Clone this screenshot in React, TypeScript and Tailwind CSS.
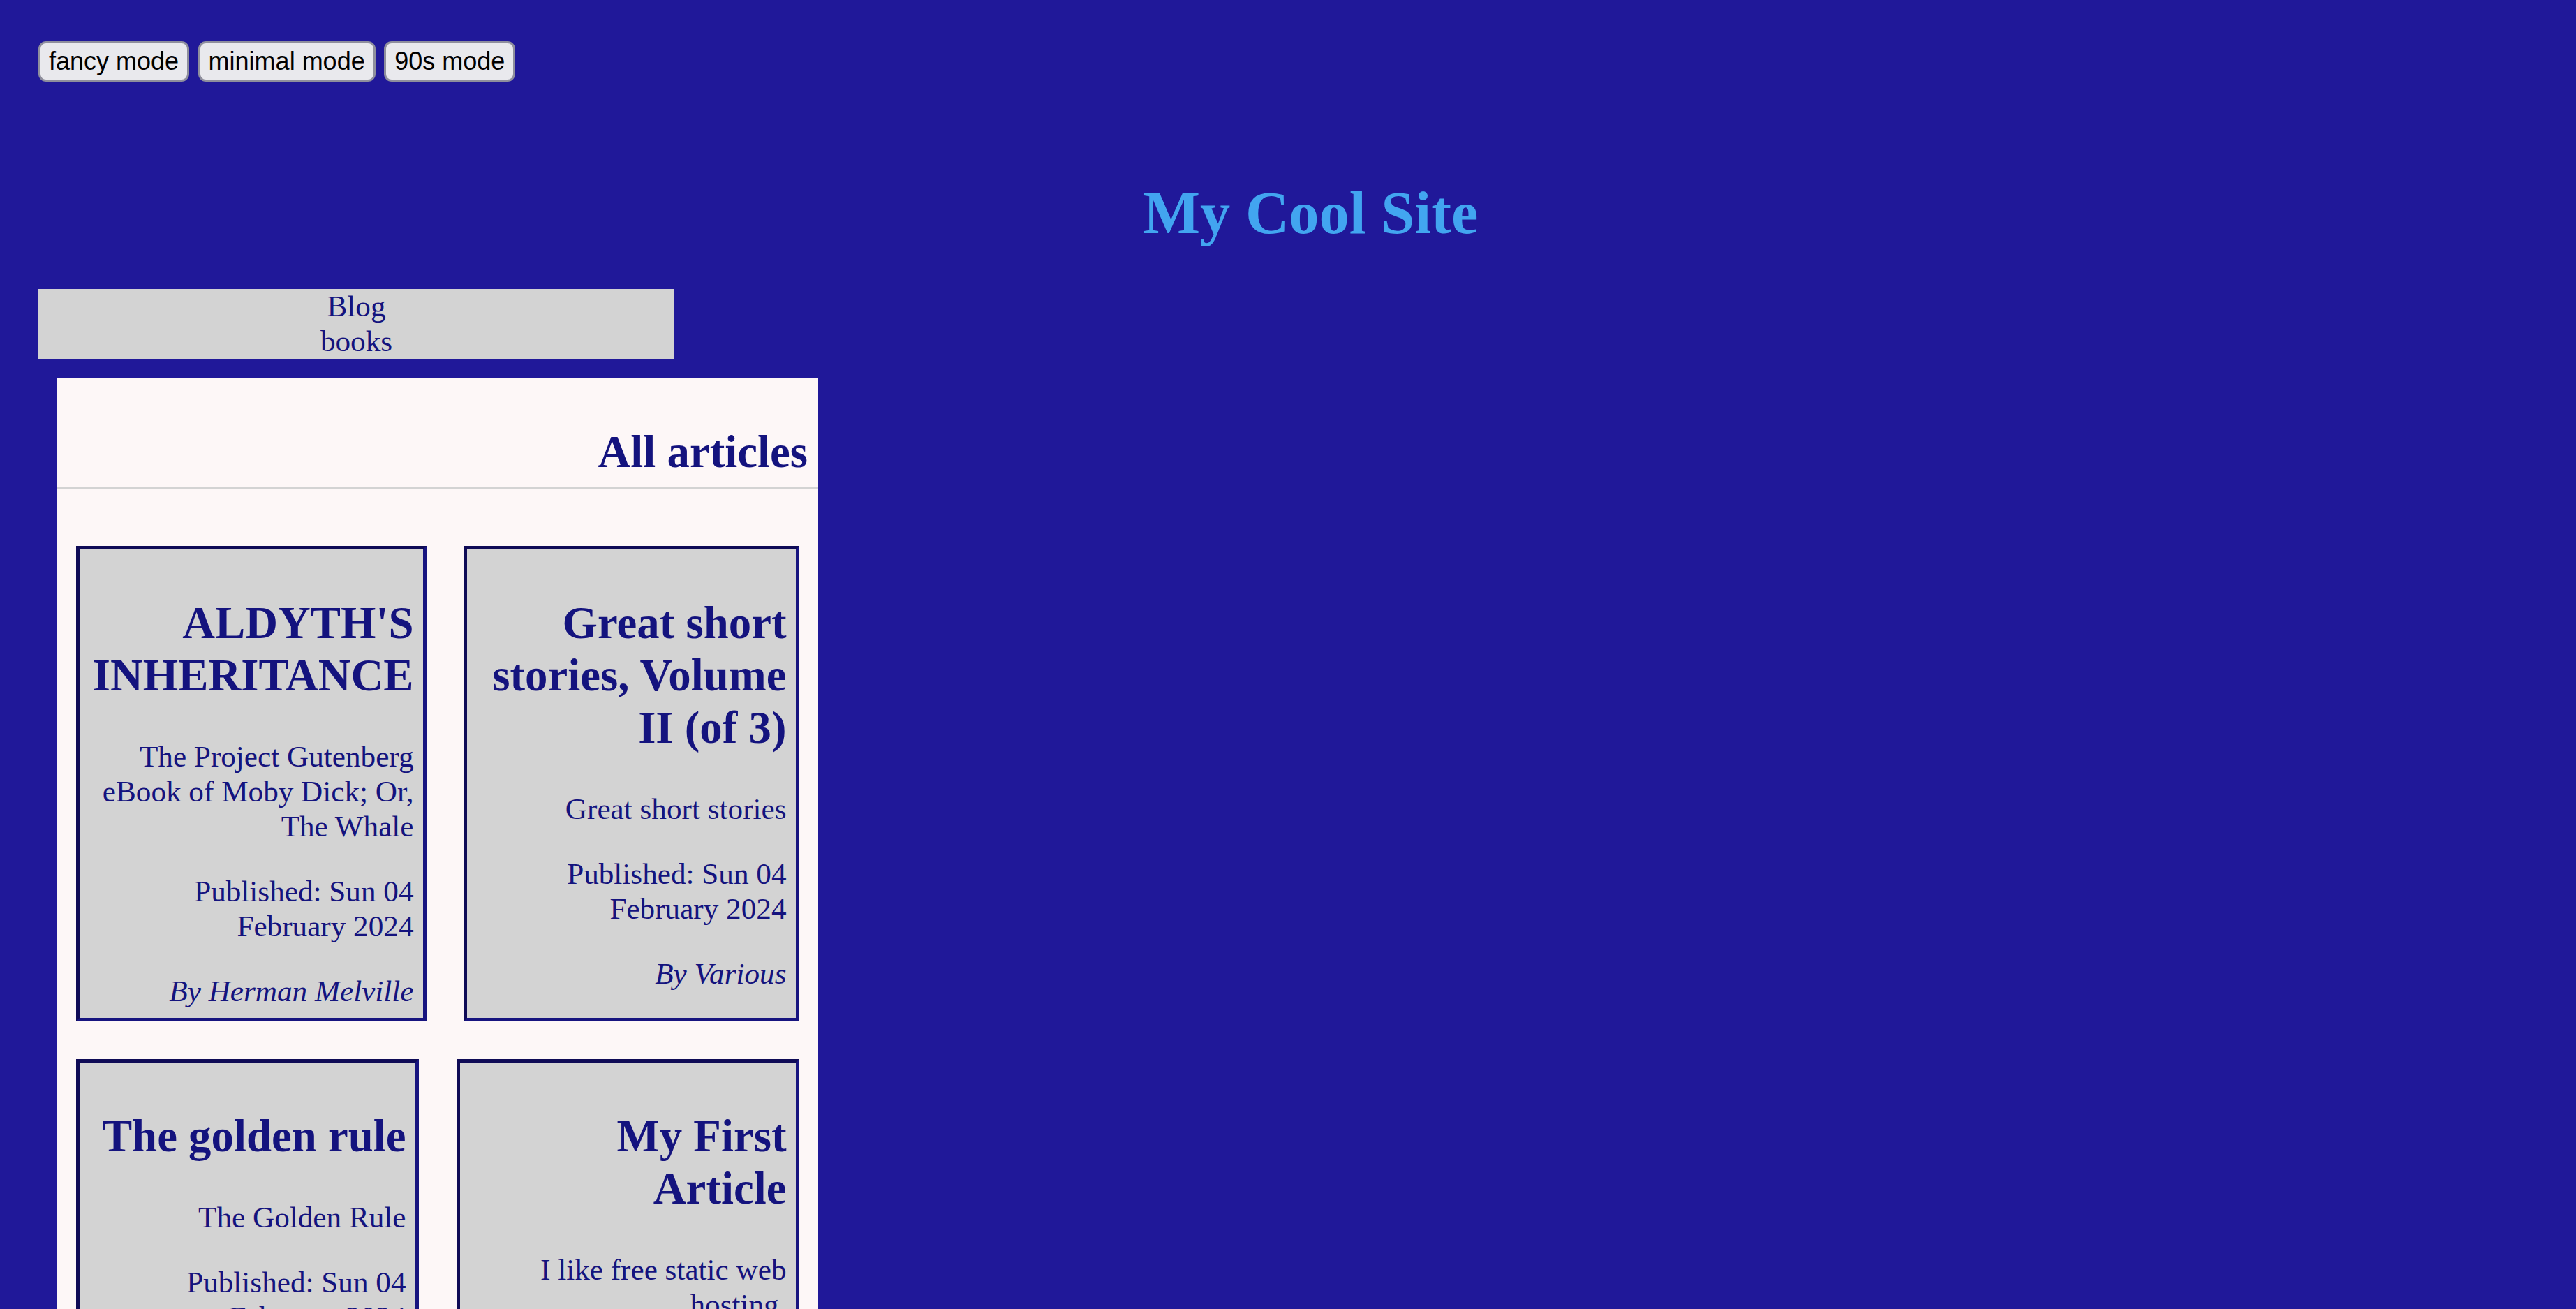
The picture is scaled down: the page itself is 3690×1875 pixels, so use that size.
import React from "react";

type Card = {
  title: React.ReactNode;
  desc: string;
  date: string;
  author: string;
  w: string;
};

const cards: Card[] = [
  {
    title: "ALDYTH'S INHERITANCE",
    desc: "The Project Gutenberg eBook of Moby Dick; Or, The Whale",
    date: "Published: Sun 04 February 2024",
    author: "By Herman Melville",
    w: "w-[502px]",
  },
  {
    title: "Great short stories, Volume II (of 3)",
    desc: "Great short stories",
    date: "Published: Sun 04 February 2024",
    author: "By Various",
    w: "w-[481px]",
  },
  {
    title: "The golden rule",
    desc: "The Golden Rule",
    date: "Published: Sun 04 February 2024",
    author: "By Anonymous",
    w: "w-[491px]",
  },
  {
    title: (
      <>
        My First
        <br />
        Article
      </>
    ),
    desc: "I like free static web hosting.",
    date: "Published: Sun 04 February 2024",
    author: "By Me",
    w: "w-[491px]",
  },
];

function Button({ label }: { label: string }) {
  return (
    <button className="flex h-[58px] items-center rounded-[11px] border-[3px] border-[#8f8f9d] bg-[#e9e9ed] px-[12px] font-['Liberation_Sans',Arial,sans-serif] text-[36px] leading-none text-black">
      {label}
    </button>
  );
}

export default function App() {
  return (
    <div className="h-[1875px] overflow-hidden bg-[#201899] font-['Liberation_Serif','Times_New_Roman',serif] text-[43.2px] leading-[50px] text-[#14137e]">
      <div className="flex gap-[12.5px] pl-[55px] pt-[59px]">
        <Button label="fancy mode" />
        <Button label="minimal mode" />
        <Button label="90s mode" />
      </div>

      <h1 className="mt-[139px] pl-[65px] text-center text-[86.4px] font-bold leading-[99px] text-[#42a5f0]">
        My Cool Site
      </h1>

      <nav className="ml-[55px] mt-[59px] w-[911px] bg-[#d3d3d3] text-center leading-[50px]">
        <div>Blog</div>
        <div>books</div>
      </nav>

      <main className="ml-[82px] mt-[27px] w-[1090px] bg-[#fdf7f7]">
        <header className="border-b-2 border-[#d3d3d3] pb-[13px] pr-[15px] pt-[15px] text-right">
          <h2 className="mt-[54px] text-[64.8px] font-bold leading-[75px]">All articles</h2>
        </header>

        <div className="flex flex-wrap justify-between px-[27px] pt-[55px]">
          {cards.map((c, i) => (
            <article
              key={i}
              className={`${c.w} my-[27px] border-[5px] border-b-[#17147f] border-l-[#0f0b56] border-r-[#17147f] border-t-[#0f0b56] bg-[#d3d3d3] px-[13.5px] py-[13.5px] text-right`}
            >
              <h2 className="mb-[54px] mt-[54px] text-[64.8px] font-bold leading-[75px]">{c.title}</h2>
              <p className="my-[43.2px]">{c.desc}</p>
              <p className="my-[43.2px]">{c.date}</p>
              <p className="mb-0 mt-[43.2px] italic">{c.author}</p>
            </article>
          ))}
        </div>
      </main>
    </div>
  );
}
